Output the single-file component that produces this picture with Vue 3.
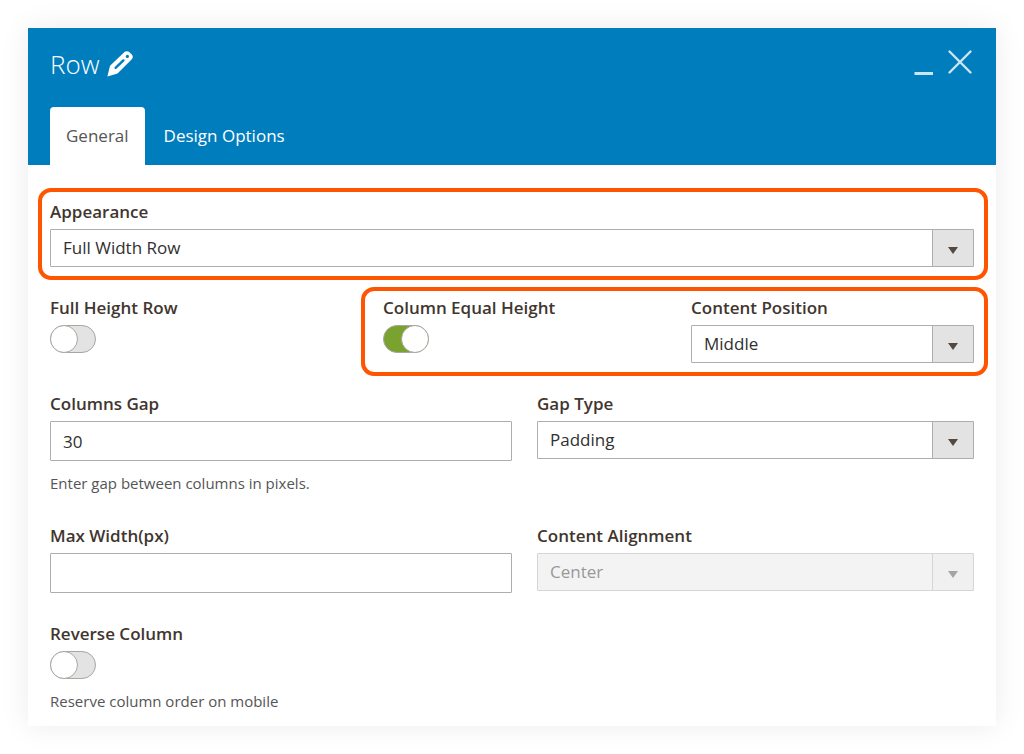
<script setup>
import { ref } from 'vue'

const tabs = ['General', 'Design Options']
const activeTab = ref('General')
const appearance = ref('Full Width Row')
const fullHeight = ref(false)
const equalHeight = ref(true)
const position = ref('Middle')
const gap = ref('30')
const gapType = ref('Padding')
const maxWidth = ref('')
const alignment = ref('Center')
const reverse = ref(false)
</script>

<template>
  <main class="modal">
    <header class="header">
      <div class="title-bar">
        <h1 class="title">
          Row
          <button type="button" class="icon-button" aria-label="Rename">
            <svg width="26" height="26" viewBox="0 0 26 26" aria-hidden="true">
              <path
                fill="#fff"
                d="M0.4 25.4 L2.8 15.4 Q3 14.8 3.6 14.2 L17.2 1.2 Q18.2 0.2 19.6 0.2 Q21.2 0.2 22.2 1 L24.8 3.4 Q25.8 4.6 25.8 5.8 Q25.8 7.2 24.8 8.2 L11 22 Q10.4 22.6 9.8 22.8 Z"
              />
              <path
                stroke="#007dbd"
                stroke-width="2.4"
                stroke-linecap="round"
                d="M8.6 16.8 L16.4 9.4"
              />
              <circle cx="20.4" cy="5.4" r="1.6" fill="#007dbd" />
            </svg>
          </button>
        </h1>
        <div class="window-actions">
          <button type="button" class="icon-button" aria-label="Minimize">
            <svg width="20" height="26" viewBox="0 0 20 26" aria-hidden="true">
              <path stroke="#cce5f2" stroke-width="3" d="M0.5 24.5 H19" />
            </svg>
          </button>
          <button type="button" class="icon-button" aria-label="Close">
            <svg width="26" height="26" viewBox="0 0 26 26" aria-hidden="true">
              <path
                stroke="#cce5f2"
                stroke-width="2.4"
                stroke-linecap="round"
                d="M2.5 2.5 L23.5 23.5 M23.5 2.5 L2.5 23.5"
              />
            </svg>
          </button>
        </div>
      </div>
      <nav class="tabs" role="tablist">
        <button
          v-for="tab in tabs"
          :key="tab"
          type="button"
          role="tab"
          class="tab"
          :class="{ active: tab === activeTab }"
          :aria-selected="tab === activeTab"
          @click="activeTab = tab"
        >
          {{ tab }}
        </button>
      </nav>
    </header>

    <form class="body" @submit.prevent>
      <div class="field highlight highlight-full">
        <label class="label" for="appearance">Appearance</label>
        <div class="select">
          <select id="appearance" v-model="appearance">
            <option>Full Width Row</option>
          </select>
          <span class="arrow"></span>
        </div>
      </div>

      <div class="row thirds">
        <div class="field">
          <label class="label" for="full-height">Full Height Row</label>
          <input id="full-height" v-model="fullHeight" class="toggle" type="checkbox" />
        </div>
        <div class="pair highlight highlight-pair">
          <div class="field">
            <label class="label" for="equal-height">Column Equal Height</label>
            <input id="equal-height" v-model="equalHeight" class="toggle" type="checkbox" />
          </div>
          <div class="field">
            <label class="label" for="position">Content Position</label>
            <div class="select">
              <select id="position" v-model="position">
                <option>Middle</option>
              </select>
              <span class="arrow"></span>
            </div>
          </div>
        </div>
      </div>

      <div class="row halves">
        <div class="field">
          <label class="label" for="gap">Columns Gap</label>
          <input id="gap" v-model="gap" class="text" type="text" aria-describedby="gap-note" />
          <p id="gap-note" class="note">Enter gap between columns in pixels.</p>
        </div>
        <div class="field inset">
          <label class="label" for="gap-type">Gap Type</label>
          <div class="select">
            <select id="gap-type" v-model="gapType">
              <option>Padding</option>
            </select>
            <span class="arrow"></span>
          </div>
        </div>
      </div>

      <div class="row halves">
        <div class="field">
          <label class="label" for="max-width">Max Width(px)</label>
          <input id="max-width" v-model="maxWidth" class="text" type="text" />
        </div>
        <div class="field inset">
          <label class="label" for="alignment">Content Alignment</label>
          <div class="select disabled">
            <select id="alignment" v-model="alignment" disabled>
              <option>Center</option>
            </select>
            <span class="arrow"></span>
          </div>
        </div>
      </div>

      <div class="field">
        <label class="label" for="reverse">Reverse Column</label>
        <input
          id="reverse"
          v-model="reverse"
          class="toggle"
          type="checkbox"
          aria-describedby="reverse-note"
        />
        <p id="reverse-note" class="note">Reserve column order on mobile</p>
      </div>
    </form>
  </main>
</template>

<style>
body {
  background: #fff;
}
</style>

<style scoped>
.modal,
.modal *,
.modal *::before {
  box-sizing: border-box;
}

.modal {
  margin: 28px;
  background: #fff;
  box-shadow: 0 0 28px rgba(0, 0, 0, 0.08);
  color: #303030;
  font-family: "Open Sans", "Noto Sans", sans-serif;
  font-size: 17px;
}

.header {
  padding: 21px 22px 0;
  background: #007dbd;
}

.title-bar {
  display: flex;
  justify-content: space-between;
  align-items: flex-start;
  height: 58px;
}

.title {
  display: flex;
  align-items: center;
  gap: 7px;
  margin: 0;
  color: #fff;
  font-size: 26px;
  font-weight: 300;
  line-height: 30px;
}

.window-actions {
  display: flex;
  gap: 13px;
  margin-right: 1px;
}

.icon-button {
  display: flex;
  padding: 0;
  border: 0;
  background: none;
  cursor: pointer;
}

.icon-button svg {
  display: block;
  fill: none;
}

.tabs {
  display: flex;
}

.tab {
  height: 58px;
  padding: 0 16px;
  border: 0;
  border-radius: 4px 4px 0 0;
  background: none;
  color: #fff;
  font: inherit;
  line-height: 24px;
  cursor: pointer;
}

.tab + .tab {
  margin-left: 3px;
}

.tab.active {
  background: #fff;
  color: #555;
}

.body {
  display: flex;
  flex-direction: column;
  gap: 29px;
  padding: 35px 22px 13px;
}

.row {
  display: grid;
}

.thirds {
  grid-template-columns: repeat(3, 1fr);
}

.halves {
  grid-template-columns: repeat(2, 1fr);
}

.inset {
  margin-left: 25px;
}

.pair {
  display: grid;
  grid-column: span 2;
  grid-template-columns: repeat(2, 1fr);
  gap: 25px;
  margin-left: 25px;
}

.field {
  display: flex;
  flex-direction: column;
  align-items: stretch;
}

.label {
  margin-bottom: 5px;
  color: #41362f;
  font-weight: 600;
  line-height: 24px;
}

.highlight {
  position: relative;
}

.highlight::before {
  content: "";
  position: absolute;
  border: 4px solid #ff5501;
  border-radius: 13px;
  pointer-events: none;
}

.highlight-full::before {
  inset: -12px -14px -13px -12px;
}

.highlight-pair::before {
  inset: -9px -14px -13px -22px;
}

.select {
  position: relative;
}

.select select {
  display: block;
  width: 100%;
  height: 38px;
  padding: 0 52px 1px 12px;
  border: 1px solid #adadad;
  border-radius: 1px;
  background: #fff;
  color: #303030;
  font: inherit;
  appearance: none;
}

.arrow {
  position: absolute;
  top: 0;
  right: 0;
  bottom: 0;
  display: flex;
  align-items: center;
  justify-content: center;
  width: 42px;
  padding-top: 4px;
  border: 1px solid #adadad;
  border-radius: 0 1px 1px 0;
  background: #e3e3e3;
  pointer-events: none;
}

.arrow::after {
  content: "";
  border: 5px solid transparent;
  border-top: 7px solid #514943;
  border-bottom: 0;
}

.disabled {
  opacity: 0.5;
}

.disabled select {
  background: #e9e9e9;
  opacity: 1;
}

.text {
  width: 100%;
  height: 40px;
  padding: 0 12px;
  border: 1px solid #adadad;
  border-radius: 1px;
  background: #fff;
  color: #303030;
  font: inherit;
}

.toggle {
  width: 46px;
  height: 28px;
  margin: 0;
  border: 1px solid #aaa6a0;
  border-radius: 14px;
  background: #e3e3e3;
  cursor: pointer;
  appearance: none;
}

.toggle::before {
  content: "";
  display: block;
  width: 28px;
  height: 28px;
  margin: -1px;
  border: 1px solid #aaa6a0;
  border-radius: 50%;
  background: #fff;
}

.toggle:checked {
  background: #79a22e;
}

.toggle:checked::before {
  margin-left: 17px;
}

.note {
  margin: 12px 0 0;
  padding-bottom: 1px;
  color: #555;
  font-size: 15px;
  line-height: 21px;
}
</style>
